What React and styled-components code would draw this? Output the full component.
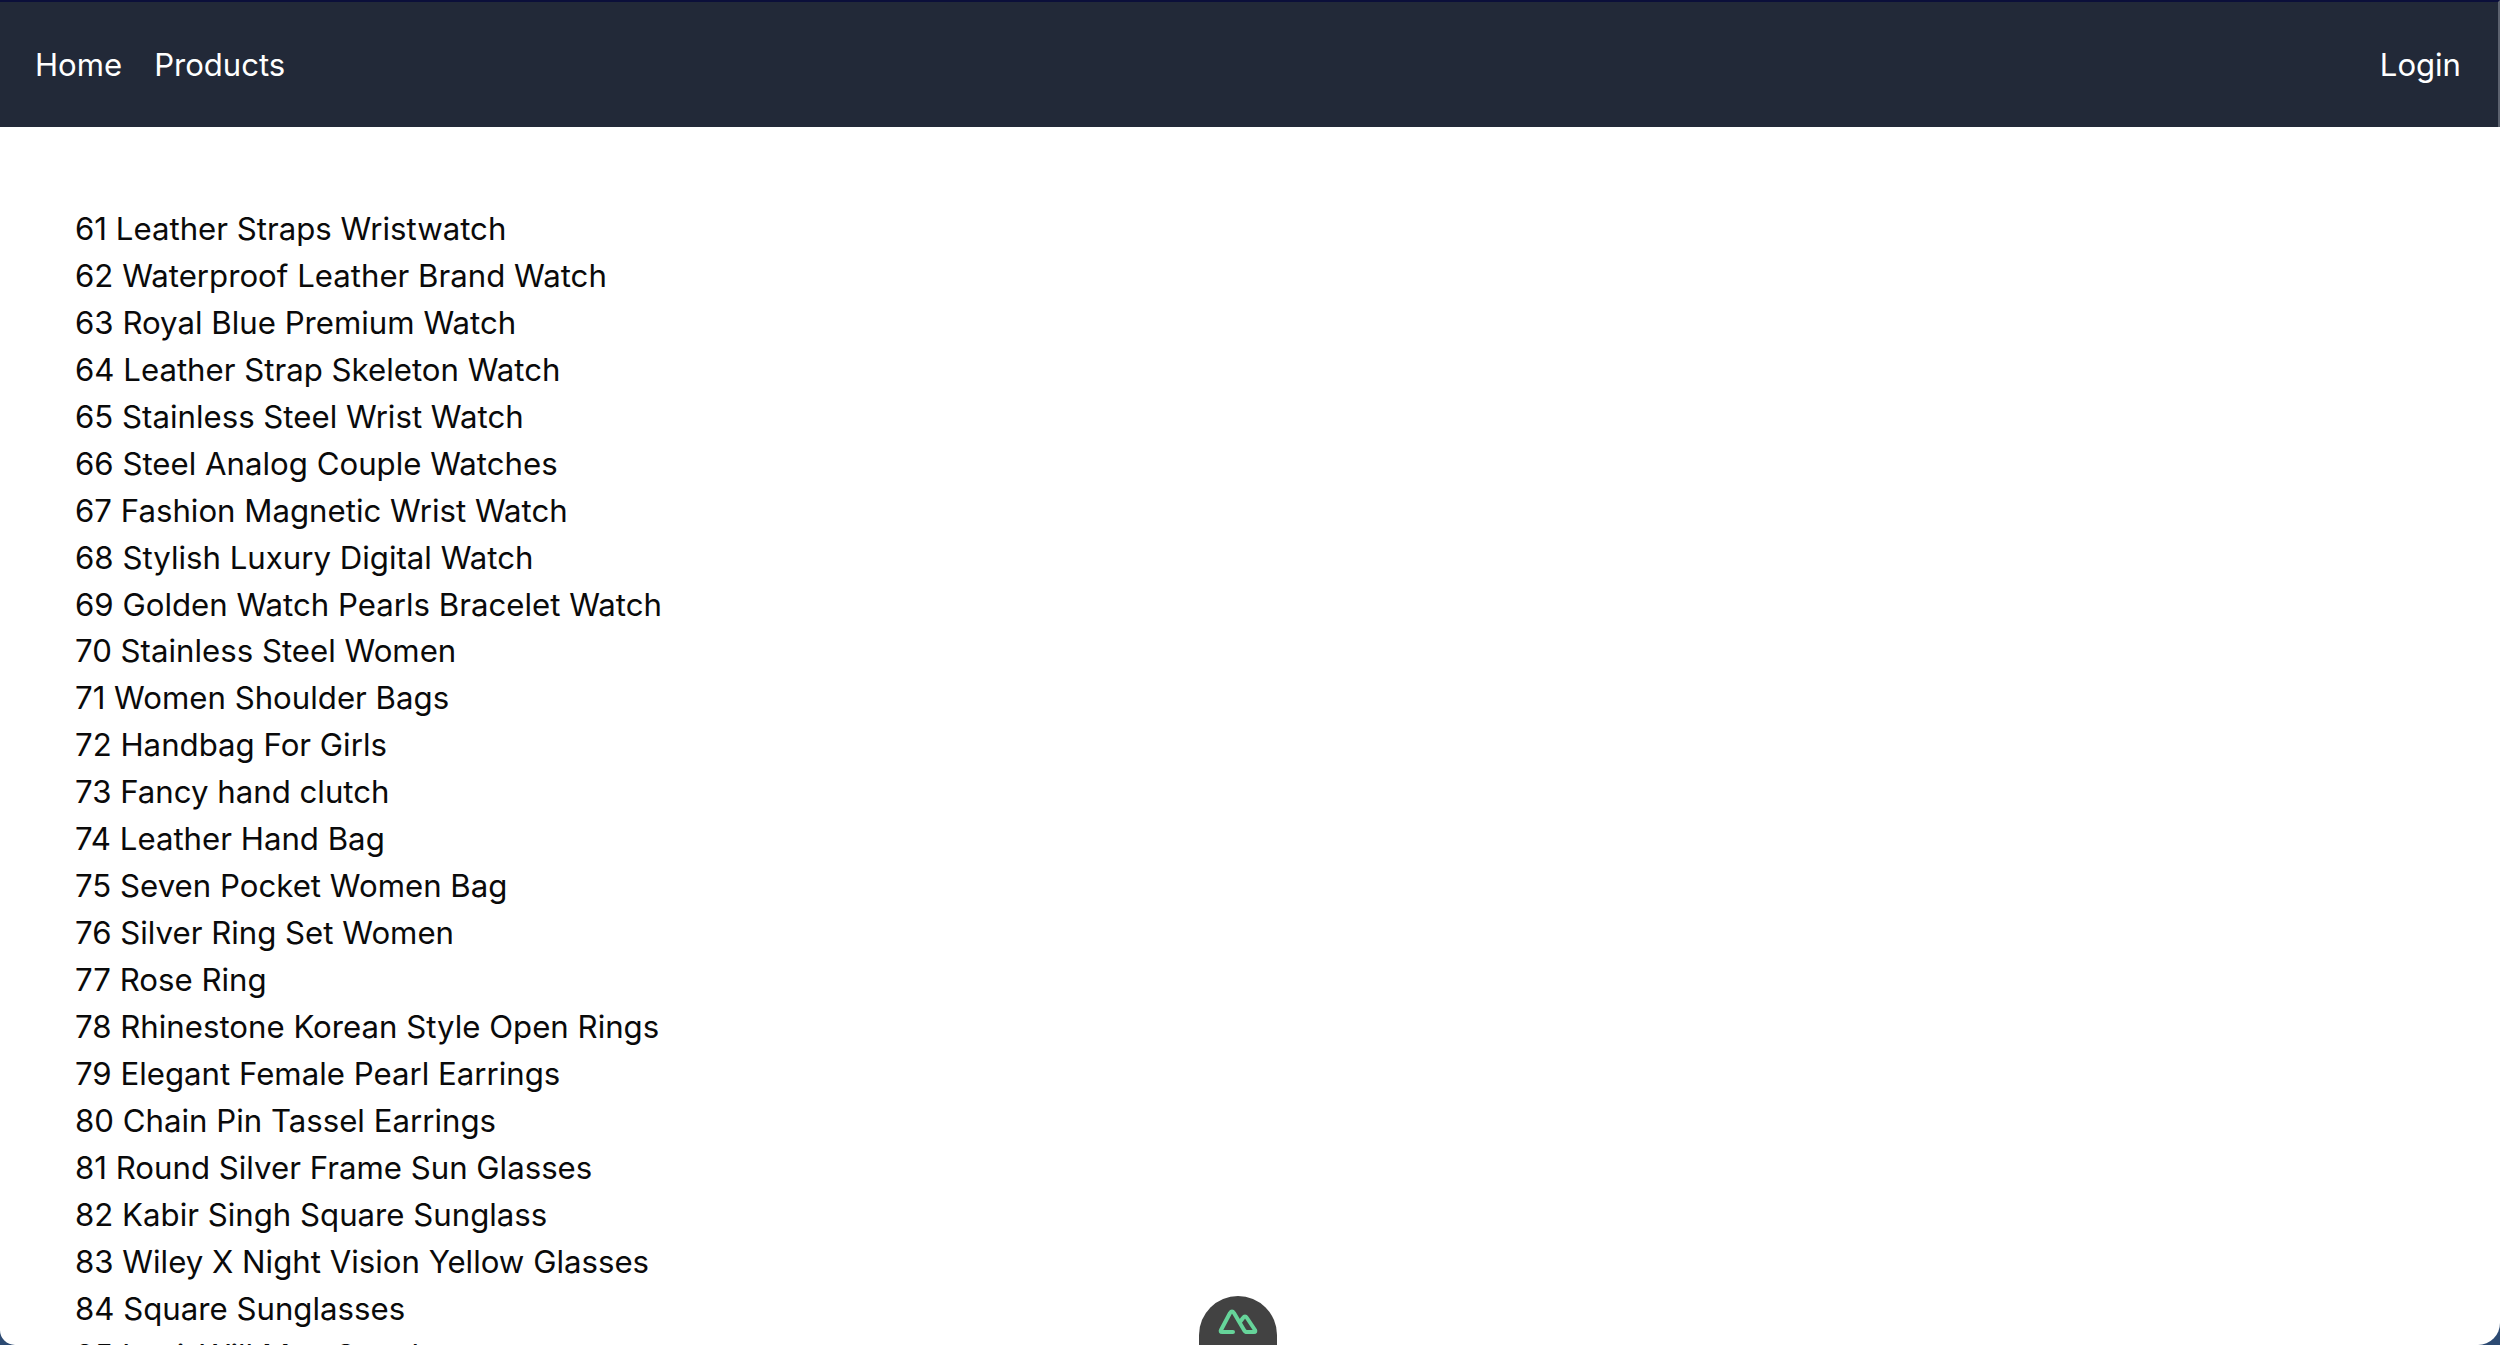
import React from "react";
import styled, { createGlobalStyle } from "styled-components";

const Global = createGlobalStyle`
  html, body { margin: 0; padding: 0; height: 100%; overflow: hidden; background: #2c4a72; }
  #root { height: 100%; }
  * { box-sizing: border-box; }
`;

const Window = styled.div`
  position: relative;
  height: 1345px;
  overflow: hidden;
  background: #fff;
  border-radius: 0 0 22px 15px;
  font-family: Inter, "Liberation Sans", sans-serif;
`;

const Header = styled.header`
  display: flex;
  align-items: center;
  justify-content: space-between;
  height: 127px;
  padding: 0 37px 0 35px;
  background: #222938;
  border-top: 2px solid #0b0f3a;
  border-right: 2px solid #5b616e;
`;

const Nav = styled.nav`
  display: flex;
  gap: 32px;
`;

const NavLink = styled.a`
  color: #fff;
  font-size: 31.1px;
  line-height: 40px;
`;

const List = styled.ul`
  list-style: none;
  margin: 0;
  padding: 79px 0 0 75px;
`;

const Item = styled.li`
  color: #0a0a0a;
  font-size: 31.2px;
  line-height: 46.93px;
`;

const Badge = styled.div`
  position: absolute;
  left: 1199px;
  bottom: 0;
  width: 78px;
  height: 49px;
  display: flex;
  justify-content: center;
  padding-top: 13px;
  background: #424242;
  border-radius: 39px 39px 0 0;
`;

const products = [
  "61 Leather Straps Wristwatch",
  "62 Waterproof Leather Brand Watch",
  "63 Royal Blue Premium Watch",
  "64 Leather Strap Skeleton Watch",
  "65 Stainless Steel Wrist Watch",
  "66 Steel Analog Couple Watches",
  "67 Fashion Magnetic Wrist Watch",
  "68 Stylish Luxury Digital Watch",
  "69 Golden Watch Pearls Bracelet Watch",
  "70 Stainless Steel Women",
  "71 Women Shoulder Bags",
  "72 Handbag For Girls",
  "73 Fancy hand clutch",
  "74 Leather Hand Bag",
  "75 Seven Pocket Women Bag",
  "76 Silver Ring Set Women",
  "77 Rose Ring",
  "78 Rhinestone Korean Style Open Rings",
  "79 Elegant Female Pearl Earrings",
  "80 Chain Pin Tassel Earrings",
  "81 Round Silver Frame Sun Glasses",
  "82 Kabir Singh Square Sunglass",
  "83 Wiley X Night Vision Yellow Glasses",
  "84 Square Sunglasses",
  "85 LouisWill Men Sunglasses",
];

export default function App() {
  return (
    <Window>
      <Global />
      <Header>
        <Nav>
          <NavLink>Home</NavLink>
          <NavLink>Products</NavLink>
        </Nav>
        <NavLink>Login</NavLink>
      </Header>
      <List>
        {products.map((p) => (
          <Item key={p}>{p}</Item>
        ))}
      </List>
      <Badge>
        <svg width="40" height="26" viewBox="0 0 40 26" fill="none" stroke="#66d49a" strokeWidth="4" strokeLinejoin="round" strokeLinecap="round">
          <path d="M15 23 H4 Q2 23 3 21 L12 4 Q14 1 16 4 L26 21 Q27 23 29 23 H36 Q38 23 37 21 L29 9 Q27 6 25 9 L22 13" />
        </svg>
      </Badge>
    </Window>
  );
}
